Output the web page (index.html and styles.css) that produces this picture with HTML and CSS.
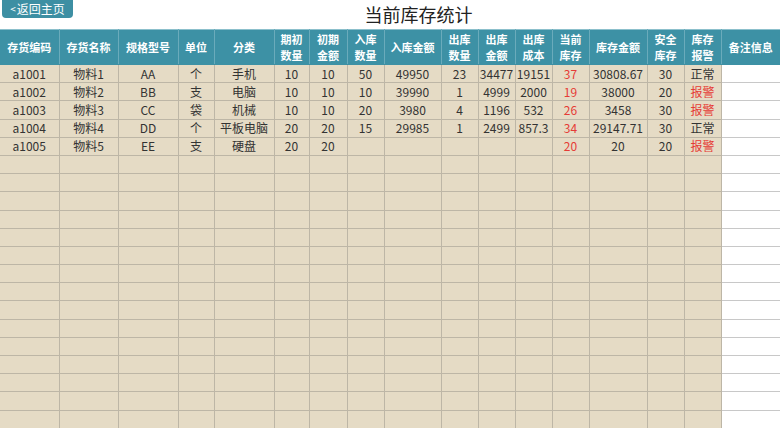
FILE: index.html
```html
<!DOCTYPE html>
<html lang="zh">
<head>
<meta charset="utf-8">
<title>当前库存统计</title>
<link rel="stylesheet" href="styles.css">
</head>
<body>
<div class="topbar">
  <a class="back-btn" href="#"><span class="lt">&lt;</span>返回主页</a>
  <h1 class="title">当前库存统计</h1>
</div>
<table class="grid">
  <colgroup>
    <col class="w59"><col class="w59"><col class="w60"><col class="w36"><col class="w60">
    <col class="w35"><col class="w38"><col class="w37"><col class="w57"><col class="w37">
    <col class="w37"><col class="w37"><col class="w37"><col class="w58"><col class="w37">
    <col class="w37"><col class="w59">
  </colgroup>
  <thead>
    <tr>
      <th>存货编码</th><th>存货名称</th><th>规格型号</th><th>单位</th><th>分类</th>
      <th>期初<br>数量</th><th>初期<br>金额</th><th>入库<br>数量</th><th>入库金额</th>
      <th>出库<br>数量</th><th>出库<br>金额</th><th>出库<br>成本</th><th>当前<br>库存</th>
      <th>库存金额</th><th>安全<br>库存</th><th>库存<br>报警</th><th>备注信息</th>
    </tr>
  </thead>
  <tbody>
    <tr><td>a1001</td><td>物料1</td><td>AA</td><td>个</td><td>手机</td><td>10</td><td>10</td><td>50</td><td>49950</td><td>23</td><td>34477</td><td>19151</td><td class="red">37</td><td>30808.67</td><td>30</td><td>正常</td><td class="note"></td></tr>
    <tr><td>a1002</td><td>物料2</td><td>BB</td><td>支</td><td>电脑</td><td>10</td><td>10</td><td>10</td><td>39990</td><td>1</td><td>4999</td><td>2000</td><td class="red">19</td><td>38000</td><td>20</td><td class="red">报警</td><td class="note"></td></tr>
    <tr><td>a1003</td><td>物料3</td><td>CC</td><td>袋</td><td>机械</td><td>10</td><td>10</td><td>20</td><td>3980</td><td>4</td><td>1196</td><td>532</td><td class="red">26</td><td>3458</td><td>30</td><td class="red">报警</td><td class="note"></td></tr>
    <tr><td>a1004</td><td>物料4</td><td>DD</td><td>个</td><td>平板电脑</td><td>20</td><td>20</td><td>15</td><td>29985</td><td>1</td><td>2499</td><td>857.3</td><td class="red">34</td><td>29147.71</td><td>30</td><td>正常</td><td class="note"></td></tr>
    <tr><td>a1005</td><td>物料5</td><td>EE</td><td>支</td><td>硬盘</td><td>20</td><td>20</td><td></td><td></td><td></td><td></td><td></td><td class="red">20</td><td>20</td><td>20</td><td class="red">报警</td><td class="note"></td></tr>
    <tr><td></td><td></td><td></td><td></td><td></td><td></td><td></td><td></td><td></td><td></td><td></td><td></td><td></td><td></td><td></td><td></td><td class="note"></td></tr>
    <tr><td></td><td></td><td></td><td></td><td></td><td></td><td></td><td></td><td></td><td></td><td></td><td></td><td></td><td></td><td></td><td></td><td class="note"></td></tr>
    <tr><td></td><td></td><td></td><td></td><td></td><td></td><td></td><td></td><td></td><td></td><td></td><td></td><td></td><td></td><td></td><td></td><td class="note"></td></tr>
    <tr><td></td><td></td><td></td><td></td><td></td><td></td><td></td><td></td><td></td><td></td><td></td><td></td><td></td><td></td><td></td><td></td><td class="note"></td></tr>
    <tr><td></td><td></td><td></td><td></td><td></td><td></td><td></td><td></td><td></td><td></td><td></td><td></td><td></td><td></td><td></td><td></td><td class="note"></td></tr>
    <tr><td></td><td></td><td></td><td></td><td></td><td></td><td></td><td></td><td></td><td></td><td></td><td></td><td></td><td></td><td></td><td></td><td class="note"></td></tr>
    <tr><td></td><td></td><td></td><td></td><td></td><td></td><td></td><td></td><td></td><td></td><td></td><td></td><td></td><td></td><td></td><td></td><td class="note"></td></tr>
    <tr><td></td><td></td><td></td><td></td><td></td><td></td><td></td><td></td><td></td><td></td><td></td><td></td><td></td><td></td><td></td><td></td><td class="note"></td></tr>
    <tr><td></td><td></td><td></td><td></td><td></td><td></td><td></td><td></td><td></td><td></td><td></td><td></td><td></td><td></td><td></td><td></td><td class="note"></td></tr>
    <tr><td></td><td></td><td></td><td></td><td></td><td></td><td></td><td></td><td></td><td></td><td></td><td></td><td></td><td></td><td></td><td></td><td class="note"></td></tr>
    <tr><td></td><td></td><td></td><td></td><td></td><td></td><td></td><td></td><td></td><td></td><td></td><td></td><td></td><td></td><td></td><td></td><td class="note"></td></tr>
    <tr><td></td><td></td><td></td><td></td><td></td><td></td><td></td><td></td><td></td><td></td><td></td><td></td><td></td><td></td><td></td><td></td><td class="note"></td></tr>
    <tr><td></td><td></td><td></td><td></td><td></td><td></td><td></td><td></td><td></td><td></td><td></td><td></td><td></td><td></td><td></td><td></td><td class="note"></td></tr>
    <tr><td></td><td></td><td></td><td></td><td></td><td></td><td></td><td></td><td></td><td></td><td></td><td></td><td></td><td></td><td></td><td></td><td class="note"></td></tr>
    <tr><td></td><td></td><td></td><td></td><td></td><td></td><td></td><td></td><td></td><td></td><td></td><td></td><td></td><td></td><td></td><td></td><td class="note"></td></tr>
  </tbody>
</table>
</body>
</html>
```

FILE: styles.css
```css
html, body {
  margin: 0;
  padding: 0;
  background: #ffffff;
  overflow: hidden;
}
body {
  width: 780px;
  height: 428px;
  font-family: "Noto Sans CJK SC", "Noto Sans", sans-serif;
  color: #333333;
}
.topbar {
  display: flex;
  align-items: flex-start;
  height: 29px;
}
.back-btn {
  display: flex;
  align-items: center;
  justify-content: center;
  margin-left: 2px;
  width: 71px;
  height: 18px;
  background: #3d8fa3;
  border-radius: 0 0 4px 4px;
  color: #ffffff;
  font-size: 12px;
  line-height: 18px;
  text-decoration: none;
}
.back-btn .lt {
  font-size: 10px;
  margin-right: 1px;
}
.title {
  flex: 1;
  margin: 0;
  padding-right: 16px;
  text-align: center;
  font-size: 18px;
  font-weight: normal;
  line-height: 29px;
  color: #222222;
}
.grid {
  width: 780px;
  table-layout: fixed;
  border-collapse: collapse;
  font-size: 12px;
}
.w35 { width: 35px; }
.w36 { width: 36px; }
.w37 { width: 37px; }
.w38 { width: 38px; }
.w57 { width: 57px; }
.w58 { width: 58px; }
.w59 { width: 59px; }
.w60 { width: 60px; }
.grid th {
  height: 34px;
  padding: 0;
  background: #3d91a5;
  color: #ffffff;
  font-size: 11px;
  font-weight: bold;
  line-height: 16px;
  text-align: center;
  border-left: 1px solid #6aabbb;
  border-right: 1px solid #6aabbb;
  border-top: 1px solid #8cc0cc;
  border-bottom: 1px solid #3d91a5;
  white-space: nowrap;
}
.grid th:first-child { border-left: none; }
.grid th:last-child { border-right: none; }
.grid td {
  height: 17.2px;
  padding: 0;
  background: #e5dbc5;
  border: 1px solid #bdb6a6;
  text-align: center;
  font-size: 12px;
  line-height: 14px;
  white-space: nowrap;
  overflow: visible;
}
.grid td:first-child { border-left: none; }
.grid td.note {
  background: #ffffff;
  border-color: #c8c8c8;
  border-right: none;
}
.grid td.red { color: #e53b36; }
```
